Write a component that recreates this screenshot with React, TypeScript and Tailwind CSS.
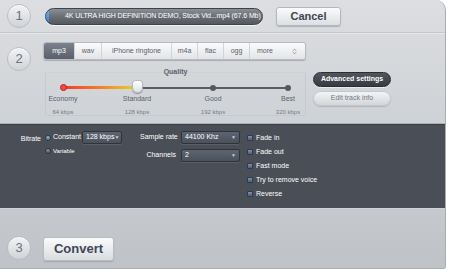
import { ChevronsUpDown } from 'lucide-react'

const font = { fontFamily: '"Liberation Sans", Arial, sans-serif' }

function StepCircle({ n }: { n: number }) {
  return (
    <div className="flex h-[24px] w-[24px] items-center justify-center rounded-full border border-[#b9bdc3] bg-gradient-to-b from-[#f2f3f5] to-[#d0d3d7] text-[13px] text-[#6d727b] shadow-[inset_0_1px_0_#fff]">
      {n}
    </div>
  )
}

const levels = [
  { name: 'Economy', kbps: '64 kbps', x: 17 },
  { name: 'Standard', kbps: '128 kbps', x: 91 },
  { name: 'Good', kbps: '192 kbps', x: 167 },
  { name: 'Best', kbps: '320 kbps', x: 242 },
]

function Select({ value, w }: { value: string; w: string }) {
  return (
    <div
      className={`flex h-[13px] ${w} shrink-0 items-center justify-between rounded-[2px] border border-[#2f333a] bg-gradient-to-b from-[#5d6572] to-[#4a515d] px-[3px] text-[7px] text-white shadow-[0_1px_0_#5b5f68]`}
    >
      <span>{value}</span>
      <span className="text-[5px] text-[#c9ccd2]">▼</span>
    </div>
  )
}

function Check({ label }: { label: string }) {
  return (
    <div className="flex h-[14px] items-center gap-[3px]">
      <div className="h-[6px] w-[6px] rounded-[1px] border border-[#2f3a4a] bg-gradient-to-b from-[#7f93ad] to-[#4c5e77]" />
      <span className="text-[7px] text-white">{label}</span>
    </div>
  )
}

export default function App() {
  return (
    <div className="h-[272px] w-[450px] bg-white whitespace-nowrap" style={font}>
      <div className="flex h-[269px] w-[446px] flex-col overflow-hidden rounded-tr-[10px] rounded-br-[3px] border-r border-b border-[#a9adb3] bg-gradient-to-b from-[#dcdee1] to-[#bfc3c8]">
        {/* Step 1 */}
        <div className="flex h-[33px] items-center border-b border-[#c3c6cb] pl-[7px] shadow-[0_1px_0_#e6e8ea]">
          <StepCircle n={1} />
          <div className="ml-[14px] flex h-[17px] w-[218px] items-center overflow-hidden rounded-full border border-[#3f4349] bg-gradient-to-b from-[#8a8e95] via-[#6a6e75] to-[#55595f] shadow-[0_1px_0_#f2f3f4]">
            <div className="h-full w-[3px] rounded-l-full bg-gradient-to-b from-[#6fb2f3] to-[#2f7fd6]" />
            <span className="ml-[16px] text-[7px] tracking-[-0.1px] text-white">
              4K ULTRA HIGH DEFINITION DEMO, Stock Vid...mp4 (67.6 Mb)
            </span>
          </div>
          <button className="ml-[13px] flex h-[19px] w-[65px] items-center justify-center rounded-[3px] border border-[#b4b8bd] bg-gradient-to-b from-[#fbfbfc] to-[#dcdfe2] text-[11px] font-bold text-[#3e4453] shadow-[0_1px_1px_#aeb2b8]">
            Cancel
          </button>
        </div>

        {/* Step 2 */}
        <div className="flex h-[90px] items-start pl-[7px] pt-[9px]">
          <div className="mt-[5px]">
            <StepCircle n={2} />
          </div>
          <div className="ml-[12px] flex flex-col">
            <div className="flex h-[18px] w-[263px] overflow-hidden rounded-[3px] border border-[#b7bbc1] bg-gradient-to-b from-[#fbfbfc] to-[#e2e4e7] text-[7px] text-[#59606c] shadow-[0_1px_1px_#a9adb3]">
              <div className="flex w-[30px] items-center justify-center bg-gradient-to-b from-[#7b828d] to-[#59606b] text-white">
                mp3
              </div>
              <div className="flex w-[27px] items-center justify-center border-l border-[#d0d3d7]">wav</div>
              <div className="flex w-[70px] items-center justify-center border-l border-[#d0d3d7]">iPhone ringtone</div>
              <div className="flex w-[26px] items-center justify-center border-l border-[#d0d3d7]">m4a</div>
              <div className="flex w-[26px] items-center justify-center border-l border-[#d0d3d7]">flac</div>
              <div className="flex w-[26px] items-center justify-center border-l border-[#d0d3d7]">ogg</div>
              <div className="flex flex-1 items-center justify-between border-l border-[#d0d3d7] pr-[7px] pl-[7px]">
                <span>more</span>
                <ChevronsUpDown size={7} strokeWidth={2.5} className="text-[#7a808a]" />
              </div>
            </div>

            <div className="mt-[12px] flex">
              <div className="ml-[2px] flex h-[44px] w-[261px] flex-col rounded-[2px] border border-[#c6c9ce] border-t-[#cfd2d5]">
                <div className="mt-[-6px] text-center text-[7px] font-bold text-[#5b616b]">Quality</div>
                <div className="relative mt-[5px] h-[10px]">
                  <div className="absolute top-[4px] left-[17px] h-[2px] w-[225px] bg-[#5a5d62]" />
                  <div className="absolute top-[3px] left-[17px] h-[3px] w-[74px] bg-gradient-to-r from-[#f0322c] via-[#f57c27] to-[#d9d52b]" />
                  <div className="absolute top-[1px] left-[14px] h-[7px] w-[7px] rounded-full border border-[#b61e1e] bg-[#f24a43]" />
                  <div className="absolute top-[2px] left-[164px] h-[6px] w-[6px] rounded-full bg-[#55595e]" />
                  <div className="absolute top-[2px] left-[239px] h-[6px] w-[6px] rounded-full bg-[#55595e]" />
                  <div className="absolute top-[-3px] left-[86px] h-[13px] w-[11px] rounded-t-[4px] rounded-b-[6px] border border-[#b5b8bd] bg-gradient-to-b from-white to-[#dfe1e4] shadow-[0_1px_1px_#8f9399]" />
                </div>
                <div className="relative mt-[3px] h-[24px]">
                  {levels.map((l) => (
                    <div
                      key={l.name}
                      className="absolute top-0 flex w-[50px] flex-col items-center"
                      style={{ left: l.x - 25 }}
                    >
                      <span className="text-[7px] text-[#5c626c]">{l.name}</span>
                      <span className="mt-[3px] text-[6px] text-[#767c85]">{l.kbps}</span>
                    </div>
                  ))}
                </div>
              </div>

              <div className="ml-[7px] flex flex-col gap-[4px]">
                <button className="flex h-[15px] w-[78px] items-center justify-center rounded-full border border-[#2a2d32] bg-gradient-to-b from-[#52565d] to-[#383b41] text-[7px] font-bold text-white shadow-[0_1px_0_#e8eaec]">
                  Advanced settings
                </button>
                <button className="flex h-[15px] w-[78px] items-center justify-center rounded-full border border-[#c3c6cb] bg-gradient-to-b from-[#f3f4f5] to-[#d3d6da] text-[7px] text-[#737983] shadow-[0_1px_1px_#b3b6bb]">
                  Edit track info
                </button>
              </div>
            </div>
          </div>
        </div>

        {/* Advanced panel */}
        <div className="flex h-[85px] border-t border-[#aeb2b7] bg-[#4a4e57] pt-[7px] shadow-[inset_0_1px_0_#3b3e45]">
          <div className="flex shrink-0 items-start">
            <span className="mt-[3px] w-[41px] shrink-0 text-right text-[7px] text-white">Bitrate</span>
            <div className="ml-[4px] flex w-[37px] shrink-0 flex-col gap-[4px]">
              <div className="flex h-[13px] items-center gap-[2px]">
                <div className="h-[6px] w-[6px] rounded-full border border-[#2d3a48] bg-gradient-to-b from-[#9fb6cf] to-[#5c7690]" />
                <span className="text-[7px] text-white">Constant</span>
              </div>
              <div className="flex h-[6px] items-center gap-[2px]">
                <div className="h-[6px] w-[6px] rounded-full border border-[#2d333b] bg-gradient-to-b from-[#8b929c] to-[#5d636c]" />
                <span className="text-[6px] text-white">Variable</span>
              </div>
            </div>
            <Select value="128 kbps" w="w-[40px]" />
          </div>
          <div className="ml-[18px] flex shrink-0 flex-col gap-[5px]">
            <div className="flex items-center">
              <span className="w-[36px] text-right text-[7px] text-white">Sample rate</span>
              <div className="ml-[5px]">
                <Select value="44100 Khz" w="w-[59px]" />
              </div>
            </div>
            <div className="flex items-center">
              <span className="w-[36px] text-right text-[7px] text-white">Channels</span>
              <div className="ml-[5px]">
                <Select value="2" w="w-[59px]" />
              </div>
            </div>
          </div>
          <div className="ml-[7px] flex flex-col">
            <Check label="Fade in" />
            <Check label="Fade out" />
            <Check label="Fast mode" />
            <Check label="Try to remove voice" />
            <Check label="Reverse" />
          </div>
        </div>

        {/* Step 3 */}
        <div className="flex flex-1 items-end border-t border-[#d0d3d6] pb-[7px] pl-[7px]">
          <div className="mb-[1px]">
            <StepCircle n={3} />
          </div>
          <button className="ml-[12px] flex h-[24px] w-[71px] items-center justify-center rounded-[3px] border border-[#b9bdc2] bg-gradient-to-b from-[#fbfbfc] to-[#d9dce0] text-[13px] font-bold text-[#3f4656] shadow-[0_1px_1px_#a5a9af]">
            Convert
          </button>
        </div>
      </div>
    </div>
  )
}
